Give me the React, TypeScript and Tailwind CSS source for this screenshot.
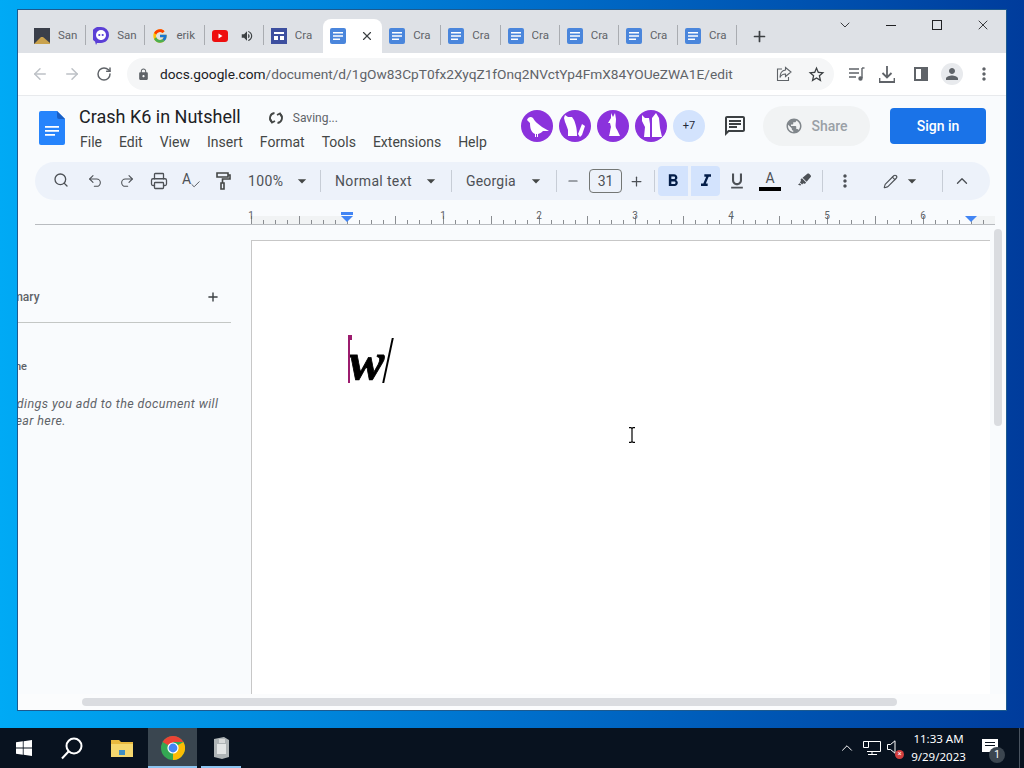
import {
  ArrowLeft,
  ArrowRight,
  Check,
  ChevronDown,
  ChevronUp,
  Minus,
  Pencil,
  Plus,
  Printer,
  RotateCw,
  Redo2,
  Search,
  Undo2,
  X,
} from "lucide-react";
import { FaHighlighter } from "react-icons/fa";
import { FcGoogle } from "react-icons/fc";
import {
  MdArrowDropDown,
  MdFormatBold,
  MdFormatItalic,
  MdFormatUnderlined,
  MdLock,
  MdMoreVert,
  MdOutlineChat,
  MdPerson,
  MdPublic,
  MdStarBorder,
  MdVolumeUp,
} from "react-icons/md";

const Sep = () => <div className="h-[22px] w-px shrink-0 bg-[#c7cdd6]" />;

function DocFavicon() {
  return (
    <svg width="16" height="16" viewBox="0 0 16 16" className="shrink-0">
      <rect width="16" height="16" rx="2" fill="#4a86dc" />
      <path d="M3 4h10v1.600H3zM3 7.200h10v1.600H3zM3 10.400h7V12H3z" fill="#fff" />
    </svg>
  );
}

function SiteFavicon({ kind }: { kind: string }) {
  if (kind === "photo")
    return (
      <svg width="16" height="16" viewBox="0 0 16 16" className="shrink-0">
        <rect width="16" height="16" fill="#3a3f4a" />
        <path d="M0 16 7 9l2 0 7 6v1z" fill="#c9a24d" />
      </svg>
    );
  if (kind === "twitch")
    return (
      <svg width="16" height="18" viewBox="0 0 16 18" className="shrink-0">
        <path d="M8 0a8 8 0 0 1 8 8c0 4.400-3.600 8-8 8H4l-1 2-1-3.400A8 8 0 0 1 8 0z" fill="#5b3fd6" />
        <path d="M8 3a5 5 0 0 1 5 5c0 2.800-2.200 5-5 5s-5-2.200-5-5a5 5 0 0 1 5-5z" fill="#fff" />
        <circle cx="6.300" cy="8" r="1.100" fill="#5b3fd6" />
        <circle cx="9.700" cy="8" r="1.100" fill="#5b3fd6" />
      </svg>
    );
  if (kind === "google") return <FcGoogle className="h-4 w-4 shrink-0" />;
  if (kind === "youtube")
    return (
      <svg width="16" height="12" viewBox="0 0 16 12" className="shrink-0">
        <rect width="16" height="12" rx="3" fill="#ee0f0f" />
        <path d="M6.500 3.500v5L10.500 6z" fill="#fff" />
      </svg>
    );
  if (kind === "board")
    return (
      <svg width="16" height="16" viewBox="0 0 16 16" className="shrink-0">
        <rect width="16" height="16" fill="#3d4f9f" />
        <path d="M3 4h10v2H3zM3 8h4v4H3zM9 8h4v4H9z" fill="#fff" />
      </svg>
    );
  return <DocFavicon />;
}

const tabs = [
  { icon: "photo", label: "San" },
  { icon: "twitch", label: "San" },
  { icon: "google", label: "erik" },
  { icon: "youtube", label: "", sound: true },
  { icon: "board", label: "Cra" },
  { icon: "doc", label: "", active: true },
  { icon: "doc", label: "Cra" },
  { icon: "doc", label: "Cra" },
  { icon: "doc", label: "Cra" },
  { icon: "doc", label: "Cra" },
  { icon: "doc", label: "Cra" },
  { icon: "doc", label: "Cra" },
];

function TabStrip() {
  return (
    <div className="relative flex h-[43px] shrink-0 items-end bg-[#dee1e6] pl-[9px]">
      {tabs.map((tab, i) => (
        <div
          key={i}
          className={
            tab.active
              ? "flex h-[34px] w-[59.200px] shrink-0 items-center rounded-t-lg bg-white pl-[7px]"
              : "relative flex h-[34px] w-[59.200px] shrink-0 items-center pl-[7px]"
          }
        >
          <SiteFavicon kind={tab.icon} />
          {tab.label && (
            <span className="ml-[8px] w-[20px] overflow-hidden text-[11.500px] whitespace-nowrap text-[#5f6368]">
              {tab.label}
            </span>
          )}
          {tab.sound && <MdVolumeUp className="ml-[12px] text-[14px] text-[#3c4043]" />}
          {tab.active && <X size={14} strokeWidth={2} className="ml-[14px] text-[#3c4043]" />}
          {!tab.active && i !== 4 && (
            <div className="absolute top-[6px] right-0 h-[20px] w-px bg-[#a9acb1]" />
          )}
        </div>
      ))}
      <div className="flex h-[34px] w-[44px] items-center justify-center">
        <Plus size={17} strokeWidth={2.400} className="text-[#3c4043]" />
      </div>
      <div className="absolute top-[7px] right-0 flex items-center text-[#202124]">
        <div className="flex w-[46px] justify-center">
          <ChevronDown size={16} strokeWidth={1.300} />
        </div>
        <div className="flex w-[46px] justify-center">
          <div className="h-px w-[10px] bg-[#202124]" />
        </div>
        <div className="flex w-[46px] justify-center">
          <div className="h-[10px] w-[10px] border border-[#202124]" />
        </div>
        <div className="flex w-[46px] justify-center">
          <X size={16} strokeWidth={1.300} />
        </div>
      </div>
    </div>
  );
}

function BrowserToolbar() {
  return (
    <div className="flex h-[43px] shrink-0 items-center border-b border-[#e8eaed] bg-white text-[#5f6368]">
      <ArrowLeft size={18} strokeWidth={2} className="ml-[13px] text-[#bdc1c6]" />
      <ArrowRight size={18} strokeWidth={2} className="ml-[14px] text-[#bdc1c6]" />
      <RotateCw size={16} strokeWidth={2.200} className="ml-[15px] text-[#5f6368]" />
      <div className="ml-[15px] flex h-[32px] w-[707px] shrink-0 items-center rounded-full bg-[#f5f6f7]">
        <MdLock className="ml-[10px] text-[13px] text-[#5f6368]" />
        <div className="ml-[10px] w-[580px] text-[13.700px] whitespace-nowrap">
          <span className="text-[#202124]">docs.google.com</span>
          <span className="text-[#5f6368]">/document/d/1gOw83CpT0fx2XyqZ1fOnq2NVctYp4FmX84YOUeZWA1E/edit</span>
        </div>
        <svg width="16" height="16" viewBox="0 0 16 16" fill="none" stroke="#5f6368" strokeWidth="1.100" className="ml-[36px]">
          <path d="M6 3H1.500v11.500h11V11" />
          <path d="M9.500 1.500 15 6l-5.500 4.500V8C7 8 5 9 4 11.500 4 7.500 6 4.500 9.500 4z" />
        </svg>
        <MdStarBorder className="ml-[15px] text-[19px] text-[#3c4043]" />
      </div>
      <svg width="16" height="14" viewBox="0 0 16 14" fill="none" stroke="#5f6368" strokeWidth="1.400" className="ml-[15px]">
        <path d="M0 2h10M0 6h10M0 10h7" />
        <path d="M13 1v10" />
        <path d="M13 1h2.500" />
        <circle cx="11.500" cy="11.500" r="1.500" fill="#5f6368" />
      </svg>
      <svg width="16" height="17" viewBox="0 0 16 17" fill="none" stroke="#5f6368" strokeWidth="1.800" className="ml-[14px]">
        <path d="M8 0v11M3.500 7 8 11.500 12.500 7" />
        <path d="M0.500 12v4h15v-4" />
      </svg>
      <div className="ml-[19px] flex h-[14px] w-[14px] justify-end border-2 border-[#5f6368]">
        <div className="h-full w-[5px] bg-[#5f6368]" />
      </div>
      <div className="ml-[13px] flex h-[22px] w-[22px] items-center justify-center rounded-full bg-[#e8eaed]">
        <MdPerson className="text-[18px] text-[#5f6368]" />
      </div>
      <MdMoreVert className="ml-[11px] text-[20px] text-[#5f6368]" />
    </div>
  );
}

const avatarPaths = [
  "M6 10c1-3 4-4 6-2 1 2 2 3 4 5l5 4 7 4h-6c-2 2-3 2-5 3v3h-1v-3h-1v3h-1v-3c-4-2-5-6-5-11z",
  "M6 5l3 2h4l2 3c2 5 3 9 3 16H9v-6c-1-3-2-6-3-8L5 8zM19 24l4-10 3 2-3 9-2 2z",
  "M14 3l2 4 2-4 1 6c0 4-1 6 0 9 2 3 3 6 4 8H12c1-3 1-6 2-9l-1-4h-2l3-5V3z",
  "M7 5l3 3h4l1 6v13H9l1-10-3-6zM17 27V8l4-5 3 5 1 10 2 9z",
];

function Avatar({ d }: { d: string }) {
  return (
    <div className="flex h-[32px] w-[32px] shrink-0 items-center justify-center rounded-full bg-[#8b32dc]">
      <svg width="32" height="32" viewBox="0 0 32 32">
        <path d={d} fill="#fff" />
      </svg>
    </div>
  );
}

function DocHeader() {
  return (
    <div className="flex h-[66px] shrink-0 items-start">
      <svg width="26" height="34" viewBox="0 0 26 34" className="mt-[15px] ml-[21px] shrink-0">
        <path d="M2 0h16l8 8v24a2 2 0 0 1-2 2H2a2 2 0 0 1-2-2V2a2 2 0 0 1 2-2z" fill="#2684fc" />
        <path d="M18 0l8 8h-6a2 2 0 0 1-2-2z" fill="#1a5fc4" />
        <path d="M6 15h14v1.800H6zM6 19h14v1.800H6zM6 23h10v1.800H6z" fill="#fff" />
      </svg>
      <div className="ml-[14px] flex flex-col">
        <div className="mt-[8px] flex h-[24px] items-center">
          <span className="text-[18px] text-[#202124]">Crash K6 in Nutshell</span>
          <svg width="16" height="16" viewBox="0 0 16 16" fill="none" stroke="#444746" strokeWidth="1.800" className="mt-[3px] ml-[27px]">
            <path d="M6.500 3A5 5 0 0 0 4 12" />
            <path d="M9.500 13A5 5 0 0 0 12 4" />
            <path d="M2 9l2 3.500L7 11M14 7l-2-3.500L9 5" />
          </svg>
          <span className="mt-[3px] ml-[9px] text-[12px] text-[#5f6368]">Saving...</span>
        </div>
        <div className="mt-[4px] flex gap-[17px] pl-px text-[14px] text-[#444746]">
          {["File", "Edit", "View", "Insert", "Format", "Tools", "Extensions", "Help"].map((m) => (
            <span key={m}>{m}</span>
          ))}
        </div>
      </div>
      <div className="ml-auto flex items-center pt-[10px] pr-[20px]">
        <div className="flex gap-[6px]">
          {avatarPaths.map((d) => (
            <Avatar key={d} d={d} />
          ))}
          <div className="flex h-[32px] w-[32px] items-center justify-center rounded-full bg-[#d3e3fd] text-[11px] text-[#1f2937]">
            +7
          </div>
        </div>
        <MdOutlineChat className="ml-[18px] text-[24px] text-[#3c4043]" />
        <div className="ml-[16px] flex h-[40px] w-[107px] items-center justify-center gap-[8px] rounded-full bg-[#f1f3f4] text-[14px] font-medium text-[#9aa0a6]">
          <MdPublic className="text-[18px] text-[#80868b]" />
          Share
        </div>
        <div className="ml-[20px] flex h-[36px] w-[96px] items-center justify-center rounded bg-[#1a73e8] text-[14px] font-medium text-white">
          Sign in
        </div>
      </div>
    </div>
  );
}

function Caret({ className }: { className: string }) {
  return <MdArrowDropDown className={"shrink-0 text-[20px] text-[#444746] " + className} />;
}

function FormatBar() {
  return (
    <div className="ml-[17px] flex h-[38px] w-[955px] shrink-0 items-center rounded-full bg-[#edf2fa] text-[#4d5156]">
      <Search size={16} strokeWidth={2} className="ml-[18px] shrink-0 -translate-y-px" />
      <Undo2 size={16} strokeWidth={1.600} className="ml-[18px] shrink-0" />
      <Redo2 size={16} strokeWidth={1.600} className="ml-[16px] shrink-0" />
      <Printer size={18} strokeWidth={1.700} className="ml-[15px] shrink-0" />
      <div className="relative ml-[14px] h-[18px] w-[18px] shrink-0">
        <span className="absolute -top-[3px] left-0 text-[14px]">A</span>
        <Check size={11} strokeWidth={2} className="absolute right-[-1px] bottom-0" />
      </div>
      <svg width="16" height="18" viewBox="0 0 16 18" fill="none" stroke="#444746" strokeWidth="1.600" className="ml-[15px] shrink-0">
        <path d="M2 1h11v4H2zM13 3h2v4H7.500v4" />
        <path d="M6 11h3v6H6z" />
      </svg>
      <span className="ml-[17px] w-[37px] text-[14px] tracking-[0.4px]">100%</span>
      <Caret className="ml-[7px]" />
      <div className="ml-[8px]"><Sep /></div>
      <span className="ml-[14px] w-[78px] text-[14px] tracking-[0.35px] whitespace-nowrap">Normal text</span>
      <Caret className="ml-[8px]" />
      <div className="ml-[10px]"><Sep /></div>
      <span className="ml-[14px] w-[52px] text-[14px] tracking-[0.2px]">Georgia</span>
      <Caret className="ml-[8px]" />
      <div className="ml-[10px]"><Sep /></div>
      <Minus size={14} strokeWidth={2} className="ml-[9px] shrink-0" />
      <div className="ml-[9px] flex h-[24px] w-[33px] shrink-0 items-center justify-center rounded border border-[#747775] text-[14px]">
        31
      </div>
      <Plus size={15} strokeWidth={2} className="ml-[7px] shrink-0" />
      <div className="ml-[10px]"><Sep /></div>
      <div className="ml-[3px] flex h-[30px] w-[30px] shrink-0 items-center justify-center rounded-l bg-[#d3e3fd] text-[#041e49]">
        <MdFormatBold className="text-[20px]" />
      </div>
      <div className="ml-[3px] flex h-[30px] w-[29px] shrink-0 items-center justify-center rounded-r bg-[#d3e3fd] text-[#041e49]">
        <MdFormatItalic className="text-[20px]" />
      </div>
      <MdFormatUnderlined className="ml-[7px] shrink-0 text-[20px]" />
      <div className="ml-[12px] flex w-[22px] shrink-0 flex-col items-center">
        <span className="h-[15px] text-[14px] leading-[15px]">A</span>
        <div className="mt-[1px] h-[4px] w-[22px] bg-black" />
      </div>
      <FaHighlighter className="ml-[17px] shrink-0 -translate-y-[2px] text-[13px]" />
      <div className="ml-[11px]"><Sep /></div>
      <MdMoreVert className="ml-[12px] shrink-0 text-[20px]" />
      <Pencil size={15} strokeWidth={1.800} className="ml-[28px] shrink-0" />
      <Caret className="ml-[4px]" />
      <div className="ml-[20px]"><Sep /></div>
      <ChevronUp size={18} strokeWidth={1.800} className="ml-[10px] shrink-0" />
    </div>
  );
}

const inchMarks = [
  { x: 251, label: "1" },
  { x: 443, label: "1" },
  { x: 539, label: "2" },
  { x: 635, label: "3" },
  { x: 731, label: "4" },
  { x: 827, label: "5" },
  { x: 923, label: "6" },
];

const ticks = Array.from({ length: 62 }, (_, i) => 251 + i * 12);

function Ruler() {
  return (
    <svg width="988" height="25" viewBox="18 200 988 25" className="block shrink-0">
      <rect x="251" y="216" width="96" height="8" fill="#f1f3f4" />
      <rect x="971" y="216" width="24" height="8" fill="#f1f3f4" />
      <path d="M35 224.500H995" stroke="#b9bcc0" strokeWidth="1" />
      {ticks.map((x) => {
        const n = (x - 251) / 12;
        return (
          <path
            key={x}
            d={`M${x + 0.5} ${n % 4 === 0 ? 216 : 220}V224`}
            stroke="#8a8d91"
            strokeWidth="1"
          />
        );
      })}
      {inchMarks.map((m) => (
        <text key={m.x} x={m.x} y="219" textAnchor="middle" fontSize="10" fill="#5f6368">
          {m.label}
        </text>
      ))}
      <path d="M341 212h12v3h-12z" fill="#4285f4" />
      <path d="M341 216h12l-6 6z" fill="#4285f4" />
      <path d="M965 216h12l-6 6z" fill="#4285f4" />
    </svg>
  );
}

function OutlineSidebar() {
  return (
    <div className="flex w-[233px] shrink-0 flex-col overflow-hidden pt-[64px] text-[#5f6368]">
      <div className="flex h-[16px] items-center">
        <span className="ml-[-30px] text-[12px] font-medium text-[#5f6368]">Summary</span>
        <Plus size={14} strokeWidth={2.400} className="mr-[31px] ml-auto text-[#3c4043]" />
      </div>
      <div className="mt-[17px] mr-[20px] h-px bg-[#c4c7c5]" />
      <span className="mt-[36px] ml-[-26px] text-[11px] font-medium">Outline</span>
      <p className="mt-[19px] ml-[-24px] w-[270px] text-[12.500px] leading-[17px] tracking-[0.4px] italic">
        Headings you add to the document will
        <br />
        appear here.
      </p>
    </div>
  );
}

function DocBody() {
  return (
    <div className="relative flex min-h-0 flex-1 flex-col">
      <div className="flex min-h-0 flex-1">
        <OutlineSidebar />
        <div className="mt-[15px] flex-1 border-t border-l border-[#c7c7c7] bg-white pt-[85px] pl-[97px]">
          <div className="relative h-[60px] text-black">
            <span className="block pt-[5px] font-['Liberation_Serif',serif] text-[53px] leading-[60px] font-bold italic [-webkit-text-stroke:0.8px_black]">w</span>
            {/* collaborator caret and the slanted italic caret */}
            <div className="absolute top-[9px] left-[-1px] h-[48px] w-[2px] bg-[#9c1c6e]" />
            <div className="absolute top-[9px] left-[-1px] h-[5px] w-[4px] bg-[#9c1c6e]" />
            <div className="absolute top-[12px] left-[38px] h-[45px] w-[1.500px] -skew-x-[12deg] bg-black" />
          </div>
        </div>
        <div className="w-[16px] shrink-0 pt-[4px] pl-[4px]">
          <div className="h-[197px] w-[8px] rounded-full bg-[#dadce0]" />
        </div>
      </div>
      <div className="flex h-[16px] shrink-0 items-center bg-[#fbfcfd] pl-[64px]">
        <div className="h-[8px] w-[815px] rounded-full bg-[#dadce0]" />
      </div>
      {/* mouse cursor over the page */}
      <svg width="8" height="16" viewBox="0 0 8 16" fill="none" className="absolute top-[202px] left-[610px]" stroke="#000" strokeWidth="1.200">
        <path d="M1 .6h2l1 1 1-1h2M4 1.500v13M1 15.400h2l1-1 1 1h2" />
      </svg>
    </div>
  );
}

function WindowsLogo() {
  return (
    <svg width="16" height="16" viewBox="0 0 16 16">
      <path d="M0 2.300 6.800 1.300v6.300H0zM7.600 1.200 16 0v7.600H7.600zM0 8.400h6.800v6.300L0 13.700zM7.600 8.400H16V16l-8.400-1.200z" fill="#fff" />
    </svg>
  );
}

function ChromeLogo() {
  return (
    <svg width="24" height="24" viewBox="0 0 24 24">
      <circle cx="12" cy="12" r="12" fill="#34a853" />
      <path d="M12 12 1.600 6A12 12 0 0 1 22.400 6H12z" fill="#ea4335" />
      <path d="M12 12 22.400 6A12 12 0 0 1 12 24z" fill="#fbbc04" />
      <circle cx="12" cy="12" r="5.600" fill="#fff" />
      <circle cx="12" cy="12" r="4.400" fill="#4285f4" />
    </svg>
  );
}

function Taskbar() {
  return (
    <div className="flex h-[40px] shrink-0 items-center bg-[#08121f] text-white">
      <div className="flex w-[48px] justify-center"><WindowsLogo /></div>
      <div className="flex w-[48px] justify-center">
        <svg width="24" height="24" viewBox="0 0 24 24" fill="none" stroke="#fff" strokeWidth="2">
          <circle cx="14" cy="10" r="7.500" />
          <path d="M8.500 15.500 2 22.500" />
        </svg>
      </div>
      <div className="ml-[2px] flex w-[48px] justify-center">
        <svg width="22" height="18" viewBox="0 0 22 18">
          <path d="M0 1h8l2 2h12v15H0z" fill="#e8b93f" />
          <path d="M0 5h22v13H0z" fill="#f5d76e" />
          <path d="M8 11h6v5H8z" fill="#3f8fc4" />
        </svg>
      </div>
      <div className="relative ml-[2px] flex h-full w-[49px] items-center justify-center bg-[#3a4650]">
        <ChromeLogo />
        <div className="absolute right-0 bottom-0 left-0 h-[2px] bg-[#8cc4f0]" />
      </div>
      <div className="relative ml-[4px] flex h-full w-[40px] items-center justify-center">
        <svg width="18" height="24" viewBox="0 0 18 24">
          <path d="M2 3l10-2 5 3v17l-7 2-8-2z" fill="#aeb4b6" />
          <path d="M5 8h9v10H5z" fill="#e2e5e5" />
          <path d="M7 3h6v4H7z" fill="#d6d9d9" />
        </svg>
        <div className="absolute right-0 bottom-0 left-0 h-[2px] bg-[#8cc4f0]" />
      </div>
      <div className="ml-auto flex h-full items-center">
        <ChevronUp size={18} strokeWidth={1.300} />
        <svg width="18" height="14" viewBox="0 0 18 14" fill="none" stroke="#fff" strokeWidth="1" className="ml-[7px]">
          <path d="M4 .5h13.500v10H4M9 10.500v3M5 13.500h9" />
          <path d="M.5 .5h5v6h-5z" />
        </svg>
        <div className="relative ml-[6px] h-[16px] w-[16px]">
          <svg width="10" height="14" viewBox="0 0 10 14" fill="none" stroke="#fff" strokeWidth="1" className="absolute top-0 left-0">
            <path d="M.5 4.500h3L8 .8v12.400L3.500 9.500h-3z" />
          </svg>
          <div className="absolute right-[-1px] bottom-[-3px] flex h-[9px] w-[9px] items-center justify-center rounded-full bg-[#d23f3f] text-[7px] leading-none">
            ×
          </div>
        </div>
        <div className="ml-[6px] flex w-[59px] flex-col items-center text-[11.500px] leading-[18px] font-['Noto_Sans',sans-serif]">
          <span>11:33 AM</span>
          <span>9/29/2023</span>
        </div>
        <div className="relative mt-[-6px] ml-[14px] h-[13px] w-[16px] bg-white">
          <div className="absolute top-[3px] right-[3px] left-[3px] h-px bg-[#08121f]" />
          <div className="absolute top-[6px] right-[3px] left-[3px] h-px bg-[#08121f]" />
          <div className="absolute top-[8px] left-[7px] flex h-[16px] w-[16px] items-center justify-center rounded-full bg-[#3c4650] text-[10px]">
            1
          </div>
        </div>
        <div className="ml-[21px] h-full w-px bg-[#4a5460]" />
        <div className="w-[4px]" />
      </div>
    </div>
  );
}

export default function App() {
  return (
    <div className="flex h-[768px] w-[1024px] flex-col overflow-hidden bg-gradient-to-r from-[#00aaf5] via-[#0070cc] to-[#003c9c] font-['Roboto',sans-serif]">
      <div className="min-h-0 flex-1 pt-[10px] pl-[18px]">
        <div className="flex h-[700px] w-[988px] flex-col overflow-hidden bg-[#f9fbfd] shadow-[0_0_0_1px_#1d5a8f]">
          <TabStrip />
          <BrowserToolbar />
          <DocHeader />
          <FormatBar />
          <Ruler />
          <DocBody />
        </div>
      </div>
      <Taskbar />
    </div>
  );
}
